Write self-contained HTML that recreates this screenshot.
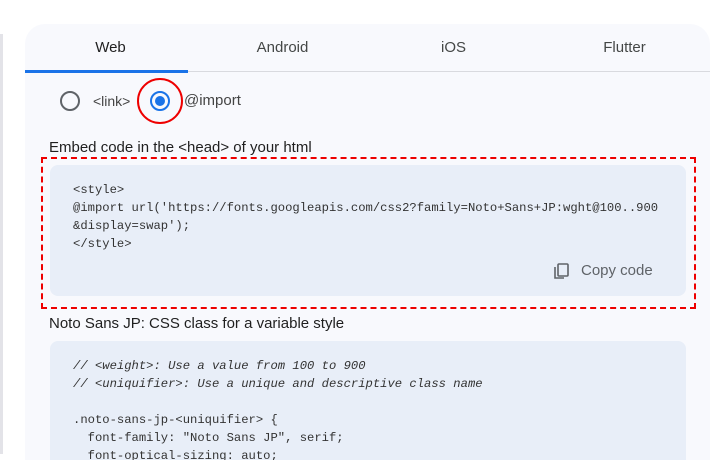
<!DOCTYPE html>
<html style="overflow:hidden;height:460px"><head><style>
body{margin:0;width:728px;height:460px;background:#fff;position:relative;overflow:hidden;font-family:"Liberation Sans",sans-serif}
.lb{position:absolute;left:0;top:34px;width:3px;height:420px;background:#e3e3e8}
.card{position:absolute;left:25px;top:24px;width:685px;height:436px;background:#f8f9fd;border-radius:20px 20px 0 0}
.tab{position:absolute;top:39px;width:171px;text-align:center;font-size:15px;color:#444746}
.line{position:absolute;left:25px;top:71px;width:685px;height:1px;background:#d9dadf}
.ul{position:absolute;left:25px;top:70px;width:163px;height:3px;background:#1a73e8}
.mono{font-family:"Liberation Mono",monospace;font-size:12.2px;color:#333;position:absolute;left:73px;line-height:18px;white-space:pre}
.code{position:absolute;left:50px;width:636px;background:#e8eef8;border-radius:8px}
.t{position:absolute;font-size:15px;color:#1f1f1f}
</style></head><body>
<div class="lb"></div>
<div class="card"></div>
<div class="tab" style="left:25px;color:#1f1f1f">Web</div>
<div class="tab" style="left:197px">Android</div>
<div class="tab" style="left:368px">iOS</div>
<div class="tab" style="left:539px">Flutter</div>
<div class="line"></div><div class="ul"></div>
<div style="position:absolute;left:60px;top:91px;width:16px;height:16px;border:2px solid #5f6368;border-radius:50%"></div>
<div class="t" style="left:93px;top:93px;font-size:14px;color:#444">&lt;link&gt;</div>
<div style="position:absolute;left:150px;top:91px;width:16px;height:16px;border:2px solid #1a73e8;border-radius:50%"></div>
<div style="position:absolute;left:155px;top:96px;width:10px;height:10px;background:#1a73e8;border-radius:50%"></div>
<div style="position:absolute;left:137px;top:78px;width:42px;height:42px;border:2px solid #e00;border-radius:50%"></div>
<div class="t" style="left:184px;top:92px;color:#444">@import</div>
<div class="t" style="left:49px;top:139px">Embed code in the &lt;head&gt; of your html</div>
<div style="position:absolute;left:41px;top:157px;width:651px;height:148px;border:2px dashed #e00"></div>
<div class="code" style="top:165px;height:131px"></div>
<div class="mono" style="top:181px">&lt;style&gt;
@import url('https://fonts.googleapis.com/css2?family=Noto+Sans+JP:wght@100..900
&amp;display=swap');
&lt;/style&gt;</div>
<svg style="position:absolute;left:553px;top:262px" width="18" height="18" viewBox="0 0 18 18"><rect x="5" y="2" width="10" height="12" rx="1" fill="none" stroke="#5f6368" stroke-width="1.6"/><path d="M2 5v11h9" fill="none" stroke="#5f6368" stroke-width="1.6"/></svg>
<div class="t" style="left:581px;top:262px;color:#5f6368">Copy code</div>
<div class="t" style="left:49px;top:315px">Noto Sans JP: CSS class for a variable style</div>
<div class="code" style="top:341px;height:119px;border-radius:8px 8px 0 0"></div>
<div class="mono" style="top:357px;font-style:italic">// &lt;weight&gt;: Use a value from 100 to 900
// &lt;uniquifier&gt;: Use a unique and descriptive class name</div>
<div class="mono" style="top:411px">.noto-sans-jp-&lt;uniquifier&gt; {
  font-family: "Noto Sans JP", serif;
  font-optical-sizing: auto;</div>
</body></html>
